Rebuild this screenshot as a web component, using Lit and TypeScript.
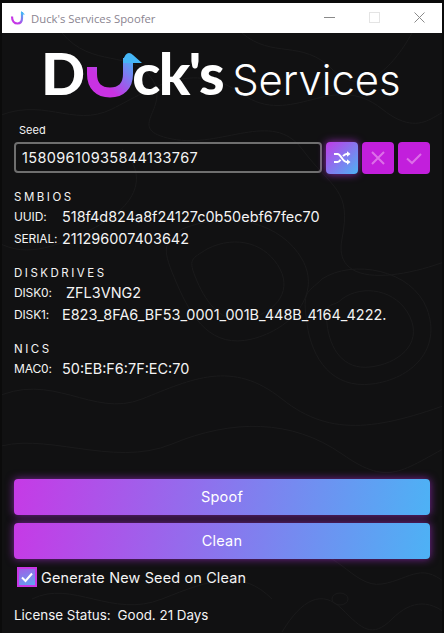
import { LitElement, html, css, svg } from "lit";
import { customElement } from "lit/decorators.js";

const topo = [
  "M-10 120C40 95 70 130 110 110S190 60 240 95 330 70 380 110 440 90 460 120",
  "M60 34C90 70 130 50 150 80S120 130 170 140 270 110 300 150 350 190 340 240 400 280 450 260",
  "M180 230C230 210 280 225 300 260S290 330 250 340 190 320 175 285 160 245 180 230Z",
  "M205 250C235 235 265 245 278 270S270 315 245 320 205 305 195 282 190 260 205 250Z",
  "M320 280C350 260 410 270 425 310S410 380 370 385 310 360 305 325 305 295 320 280Z",
  "M340 300C360 285 395 290 408 318S395 365 368 368 328 350 325 325 330 310 340 300Z",
  "M-10 400C50 370 90 420 140 400S230 360 280 400 380 430 460 400",
  "M-10 450C40 430 110 470 170 445S290 420 340 455 400 470 460 440",
  "M300 560C330 540 350 590 380 585S420 560 450 590",
  "M280 633C300 600 320 590 340 610S370 640 390 620 430 600 450 620",
  "M330 600a8 6 0 1 0 16 0a8 6 0 1 0 -16 0",
  "M30 600C70 580 110 620 160 600S240 570 270 600",
  "M240 34C270 60 300 40 330 70S390 70 410 34",
  "M120 150C150 180 130 210 90 230S20 260 -10 240",
];

@customElement("app-root")
export class AppRoot extends LitElement {
  static styles = css`
    :host {
      display: block;
      width: 444px;
      height: 633px;
      background: #0b0b0b;
      font-family: Inter, "Liberation Sans", sans-serif;
      color: #f4f4f4;
    }
    * { box-sizing: border-box; }
    .window {
      height: 100%;
      padding: 3px 2px 0;
      display: flex;
      flex-direction: column;
    }
    .titlebar {
      height: 30px;
      flex: none;
      background: #fff;
      display: flex;
      align-items: center;
      padding-left: 8px;
      color: #8a8490;
      font: 11.3px "Open Sans", "Noto Sans", sans-serif;
    }
    .app-icon { width: 16px; height: 16px; margin-right: 5px; }
    .title { flex: 1; }
    .controls { display: flex; margin-right: 17px; gap: 34px; padding-bottom: 2px; }
    .controls svg { width: 11px; height: 11px; display: block; }
    .content {
      position: relative;
      flex: 1;
      background: #111112;
      padding: 0 12px;
      display: flex;
      flex-direction: column;
      overflow: hidden;
    }
    .topo { position: absolute; inset: 0; width: 100%; height: 100%; }
    .content > :not(.topo) { position: relative; }
    .logo {
      height: 70px;
      padding: 9px 0 0 27px;
      display: flex;
      align-items: baseline;
      color: #fff;
      white-space: nowrap;
      line-height: 62px;
    }
    .logo-bold {
      font: 900 58px/62px Lato, Inter, sans-serif;
      display: flex;
      align-items: baseline;
    }
    .logo-u { width: 55px; height: 46px; margin: 0 -10px 0 2px; align-self: flex-end; position: relative; top: -6px; z-index: 1; }
    .logo-ck { letter-spacing: -1.5px; }
    .logo-light {
      font: 300 41.8px/62px Inter, Lato, sans-serif;
      margin-left: 9px;
    }
    .seed-label { font-size: 11px; line-height: 14px; margin: 20px 0 5px 5px; }
    .seed-row { display: flex; gap: 4px; height: 32px; }
    .seed-input {
      width: 308px;
      height: 31px;
      border: 2px solid #6f6f6f;
      border-radius: 4px;
      padding-left: 6px;
      display: flex;
      align-items: center;
      font-size: 14.5px;
      letter-spacing: 0.35px;
    }
    .icon-btn {
      width: 32px;
      height: 32px;
      border-radius: 4px;
      background: #c21fdc;
      display: flex;
      align-items: center;
      justify-content: center;
    }
    .icon-btn svg { width: 18px; height: 18px; }
    .icon-btn.primary {
      background: linear-gradient(135deg, #c03ae8, #4db2f5);
      box-shadow: 0 0 8px #b32fe0cc;
    }
    .sections { margin-top: 16px; display: flex; flex-direction: column; gap: 17px; }
    .section-title {
      font-size: 11.5px;
      letter-spacing: 2.5px;
      line-height: 14px;
      margin-bottom: 1px;
    }
    .row { display: flex; align-items: center; height: 22px; }
    .key { width: 48px; font-size: 12px; letter-spacing: -0.15px; flex: none; }
    .val { font-size: 14.45px; }
    .val.indent { padding-left: 4px; }
    .actions { margin-top: auto; display: flex; flex-direction: column; gap: 8px; }
    .action {
      height: 36px;
      padding-bottom: 2px;
      border-radius: 4px;
      background: linear-gradient(100deg, #c63ae6, #4db2f5);
      box-shadow: 0 0 8px #b32fe0aa;
      display: flex;
      align-items: center;
      justify-content: center;
      font-size: 14.5px;
      color: #fff;
      letter-spacing: 0.2px;
    }
    .check-row {
      display: flex;
      align-items: center;
      margin: 8px 0 0 3px;
      font-size: 14.4px;
      letter-spacing: 0.18px;
    }
    .check {
      width: 20px;
      height: 20px;
      margin-right: 4px;
      border: 2px solid #c936e6;
      background: linear-gradient(160deg, #a05ee6, #5fa6f2);
      display: flex;
      align-items: center;
      justify-content: center;
    }
    .check svg { width: 14px; height: 14px; }
    .license {
      margin: 19px 0 9px;
      font-size: 13.4px;
      line-height: 18px;
      display: flex;
      gap: 7px;
    }
  `;

  private section(name: string, rows: [string, string, boolean?][]) {
    return html`<div>
      <div class="section-title">${name}</div>
      ${rows.map(
        ([k, v, indent]) => html`<div class="row">
          <span class="key">${k}</span><span class="val ${indent ? "indent" : ""}">${v}</span>
        </div>`
      )}
    </div>`;
  }

  render() {
    return html`<div class="window">
      <div class="titlebar">
        <svg class="app-icon" viewBox="0 0 16 16">
          <defs>
            <linearGradient id="ig" x1="0" y1="1" x2="1" y2="0">
              <stop offset="0.3" stop-color="#c636e6" /><stop offset="1" stop-color="#47b4f5" />
            </linearGradient>
          </defs>
          <path d="M2 6.5C2 11 4.5 13.5 7.5 13.5S12 11 12 8V2" fill="none" stroke="url(#ig)" stroke-width="2.2" />
          <path d="M11 1L15 4.5H11Z" fill="#47b4f5" />
        </svg>
        <span class="title">Duck's Services Spoofer</span>
        <div class="controls">
          <svg viewBox="0 0 11 11"><path d="M0 5.5H11" stroke="#8a8a8a" /></svg>
          <svg viewBox="0 0 11 11"><rect x=".5" y=".5" width="10" height="10" fill="none" stroke="#e4e4e4" /></svg>
          <svg viewBox="0 0 11 11"><path d="M.5 .5L10.5 10.5M10.5 .5L.5 10.5" stroke="#8a8a8a" /></svg>
        </div>
      </div>
      <div class="content">
        <svg class="topo" viewBox="0 34 440 600" preserveAspectRatio="none">
          ${topo.map((d) => svg`<path d=${d} fill="none" stroke="#1a1a1b" stroke-width="1" />`)}
        </svg>
        <div class="logo">
          <div class="logo-bold">
            <span>D</span>
            <svg class="logo-u" viewBox="0 0 55 46">
              <defs>
                <linearGradient id="ug" gradientUnits="userSpaceOnUse" x1="8" y1="40" x2="44" y2="4">
                  <stop offset="0.25" stop-color="#c932e2" /><stop offset="0.6" stop-color="#8a6eee" /><stop offset="1" stop-color="#45b6f6" />
                </linearGradient>
              </defs>
              <path d="M5 15V22C5 34 12 40.5 23 40.5S41 34 41 22V6" fill="none" stroke="url(#ug)" stroke-width="10" />
              <path d="M36 9Q38 1 42 1Q44 1 46 3L55 11H36Z" fill="#45b6f6" />
            </svg>
            <span class="logo-ck">ck's</span>
          </div>
          <span class="logo-light">Services</span>
        </div>
        <div class="seed-label">Seed</div>
        <div class="seed-row">
          <div class="seed-input">15809610935844133767</div>
          <div class="icon-btn primary">
            <svg viewBox="0 0 18 18" fill="none" stroke="#fff" stroke-width="2">
              <path d="M1 5H4.5C8 5 9.5 13 13.5 13H15M1 13H4.5C5.8 13 6.8 12 7.6 10.8M10 7.2C11 6 12 5 13.5 5H15" />
              <path d="M14 2.2L17.5 5L14 7.8ZM14 10.2L17.5 13L14 15.8Z" fill="#fff" stroke="none" />
            </svg>
          </div>
          <div class="icon-btn">
            <svg viewBox="0 0 18 18" fill="none" stroke="#dd6fe8" stroke-width="2"><path d="M3 3L15 15M15 3L3 15" /></svg>
          </div>
          <div class="icon-btn">
            <svg viewBox="0 0 18 18" fill="none" stroke="#dd6fe8" stroke-width="2"><path d="M2 9.5L7 14L16 5" /></svg>
          </div>
        </div>
        <div class="sections">
          ${this.section("SMBIOS", [["UUID:", "518f4d824a8f24127c0b50ebf67fec70"], ["SERIAL:", "211296007403642"]])}
          ${this.section("DISKDRIVES", [["DISK0:", "ZFL3VNG2", true], ["DISK1:", "E823_8FA6_BF53_0001_001B_448B_4164_4222."]])}
          ${this.section("NICS", [["MAC0:", "50:EB:F6:7F:EC:70"]])}
        </div>
        <div class="actions">
          <div class="action">Spoof</div>
          <div class="action">Clean</div>
        </div>
        <div class="check-row">
          <div class="check">
            <svg viewBox="0 0 14 14" fill="none" stroke="#fff" stroke-width="2"><path d="M2 7.5L5.5 11L12 3.5" /></svg>
          </div>
          Generate New Seed on Clean
        </div>
        <div class="license"><span>License Status:</span><span>Good. 21 Days</span></div>
      </div>
    </div>`;
  }
}
